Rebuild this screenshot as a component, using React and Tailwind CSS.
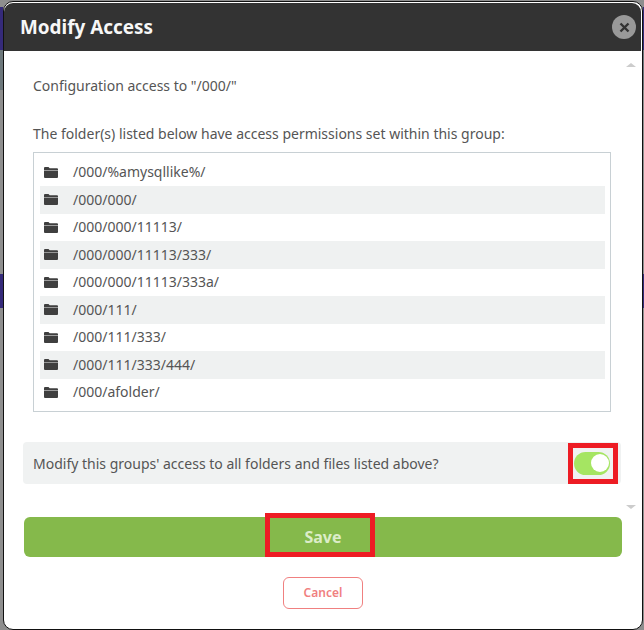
import React from 'react';

const folders = [
  '/000/%amysqllike%/',
  '/000/000/',
  '/000/000/11113/',
  '/000/000/11113/333/',
  '/000/000/11113/333a/',
  '/000/111/',
  '/000/111/333/',
  '/000/111/333/444/',
  '/000/afolder/',
];

const FolderIcon = () => (
  <svg width="14" height="11" viewBox="0 0 14 11" className="shrink-0">
    <path d="M0 2V1a1 1 0 0 1 1-1h3.5l1.2 1.2H13a1 1 0 0 1 1 1V3H0z" fill="#3f3f3f" />
    <path d="M0 3.6h14V10a1 1 0 0 1-1 1H1a1 1 0 0 1-1-1z" fill="#3f3f3f" />
  </svg>
);

// the dimmed page showing either side of the modal
const PageEdge = ({ className }) => (
  <div className={`flex h-full shrink-0 flex-col ${className}`}>
    <div className="h-[7px] bg-[#8e8e8e]" />
    <div className="h-[43px] bg-[#352a7a]" />
    <div className="h-[40px] bg-[#6d787c]" />
    <div className="h-[184px] bg-[#8e8e8e]" />
    <div className="h-[34px] bg-[#352a7a]" />
    <div className="flex-1 bg-[#8e8e8e]" />
  </div>
);

const App = () => {
  return (
    <div className="flex h-[630px] w-[644px] overflow-hidden bg-[#8e8e8e] font-['Noto_Sans',sans-serif]">
      <PageEdge className="w-[3px]" />
      <div className="mt-px h-[629px] w-[640px] shrink-0 bg-[#8e8e8e]">
        <div className="relative h-full overflow-hidden rounded-[10px] border border-[#111111] bg-white pt-px pr-px">
          <div className="flex h-[48px] items-center justify-between rounded-tl-[9px] rounded-tr-[9px] bg-[#333333] pl-[16px] pr-[5px]">
            <h1 className="text-[18.9px] font-bold text-[#f7f7f7]">Modify Access</h1>
            <div className="flex h-[24px] w-[24px] items-center justify-center rounded-full bg-[#999999]">
              <svg width="11" height="11" viewBox="0 0 11 11">
                <path d="M1.5 1.5l8 8M9.5 1.5l-8 8" stroke="#333333" strokeWidth="2.4" />
              </svg>
            </div>
          </div>

          {/* scrollbar arrows */}
          <div className="absolute right-[6px] top-[61px] h-0 w-0 border-x-[5px] border-b-[4px] border-x-transparent border-b-[#cccccc]" />
          <div className="absolute right-[6px] top-[503px] h-0 w-0 border-x-[5px] border-t-[4px] border-x-transparent border-t-[#cccccc]" />

          <div className="pl-[29px]">
            <p className="pt-[25px] text-[14px] leading-[20px] text-[#555555]">Configuration access to "/000/"</p>
            <p className="mt-[28px] text-[14px] leading-[20px] text-[#555555]">
              The folder(s) listed below have access permissions set within this group:
            </p>
            <div className="mt-[8px] h-[260px] w-[578px] border border-[#c8d0d4] pl-[6px] pr-[5px] pt-[5.5px]">
              {folders.map((f, i) => (
                <div
                  key={f}
                  className={`flex h-[27.5px] items-center gap-[15px] pl-[4px] text-[14px] text-[#555555] ${i % 2 === 1 ? 'bg-[#eff1f1]' : ''}`}
                >
                  <FolderIcon />
                  <span className="-mt-px">{f}</span>
                </div>
              ))}
            </div>

            <div className="relative -ml-[10px] mt-[30px] flex h-[42px] w-[598px] items-center justify-between rounded-[4px] bg-[#f0f2f2] pl-[10px] pr-[11px] text-[14px] text-[#555555]">
              <span>Modify this groups' access to all folders and files listed above?</span>
              <div className="flex h-[23px] w-[36px] items-center justify-end rounded-full bg-[#a5e562] pr-[1px]">
                <div className="h-[18px] w-[18px] rounded-full bg-white" />
              </div>
              <div className="absolute right-[3px] top-px h-[41px] w-[50px] border-[5px] border-[#ed1c24]" />
            </div>

            <div className="relative -ml-[9px] mt-[33px] flex h-[40px] w-[598px] items-center justify-center rounded-[6px] bg-[#85b94b] text-[16px] font-bold text-[#dcedc8]">
              Save
              <div className="absolute -top-[4px] left-[241px] h-[44px] w-[110px] border-[5px] border-[#ed1c24]" />
            </div>

            <div className="-ml-[9px] mt-[20px] flex w-[598px] justify-center">
              <div className="flex h-[32px] w-[80px] items-center justify-center rounded-[6px] border border-[#f08080] text-[12px] font-semibold text-[#f08080]">
                Cancel
              </div>
            </div>
          </div>
        </div>
      </div>
      <PageEdge className="w-px" />
    </div>
  );
};

export default App;
